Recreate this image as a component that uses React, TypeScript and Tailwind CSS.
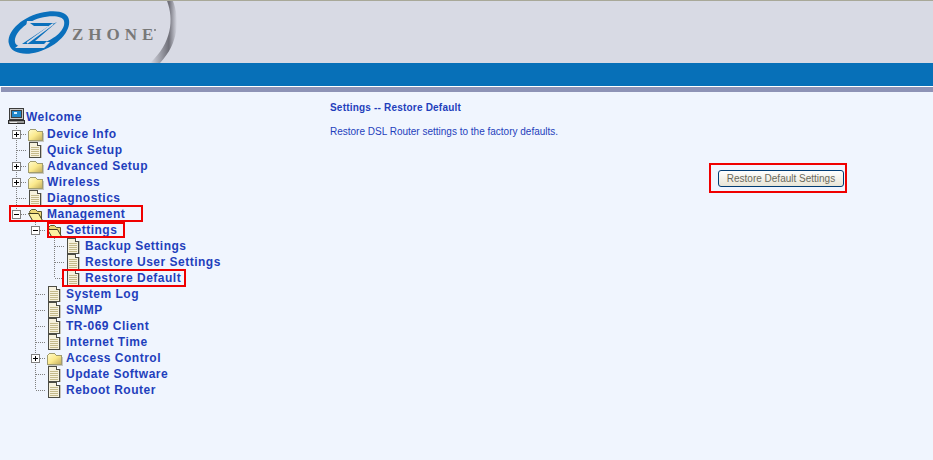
import React from 'react';

type Cell = 'I' | 'T' | 'L' | 'plus' | 'minus' | 'lastMinus' | 'blank';

interface TreeRow {
  cells: Cell[];
  icon: 'folder' | 'open' | 'doc';
  label: string;
  box?: string;
}

const rows: TreeRow[] = [
  { cells: ['plus'], icon: 'folder', label: 'Device Info' },
  { cells: ['T'], icon: 'doc', label: 'Quick Setup' },
  { cells: ['plus'], icon: 'folder', label: 'Advanced Setup' },
  { cells: ['plus'], icon: 'folder', label: 'Wireless' },
  { cells: ['T'], icon: 'doc', label: 'Diagnostics' },
  { cells: ['lastMinus'], icon: 'open', label: 'Management', box: 'left-[9px] top-[-4px] w-[134px] h-[17px]' },
  { cells: ['blank', 'minus'], icon: 'open', label: 'Settings', box: 'left-[47px] top-[-3px] w-[78px] h-[16px]' },
  { cells: ['blank', 'I', 'T'], icon: 'doc', label: 'Backup Settings' },
  { cells: ['blank', 'I', 'T'], icon: 'doc', label: 'Restore User Settings' },
  { cells: ['blank', 'I', 'L'], icon: 'doc', label: 'Restore Default', box: 'left-[62px] top-[-4px] w-[124px] h-[18px]' },
  { cells: ['blank', 'T'], icon: 'doc', label: 'System Log' },
  { cells: ['blank', 'T'], icon: 'doc', label: 'SNMP' },
  { cells: ['blank', 'T'], icon: 'doc', label: 'TR-069 Client' },
  { cells: ['blank', 'T'], icon: 'doc', label: 'Internet Time' },
  { cells: ['blank', 'plus'], icon: 'folder', label: 'Access Control' },
  { cells: ['blank', 'T'], icon: 'doc', label: 'Update Software' },
  { cells: ['blank', 'L'], icon: 'doc', label: 'Reboot Router' },
];

const Connector: React.FC<{ type: Cell }> = ({ type }) => {
  const dots = { stroke: '#808080', strokeDasharray: '1 1', shapeRendering: 'crispEdges' as const };
  if (type === 'blank') return <div className="w-[19px] h-4 shrink-0" />;
  const hasBox = type === 'plus' || type === 'minus' || type === 'lastMinus';
  const goesDown = type !== 'L' && type !== 'lastMinus';
  return (
    <svg width="19" height="16" className="shrink-0 block">
      <line x1="9.5" y1="0" x2="9.5" y2={goesDown ? 16 : 8} {...dots} />
      {type !== 'I' && <line x1="10" y1="8.5" x2="19" y2="8.5" {...dots} />}
      {hasBox && (
        <g shapeRendering="crispEdges">
          <rect x="5.5" y="4.5" width="8" height="8" fill="#fff" stroke="#808080" />
          <line x1="7" y1="8.5" x2="12" y2="8.5" stroke="#000" />
          {type === 'plus' && <line x1="9.5" y1="6" x2="9.5" y2="11" stroke="#000" />}
        </g>
      )}
    </svg>
  );
};

const FolderIcon: React.FC = () => (
  <svg width="19" height="16" className="shrink-0 block">
    <defs>
      <linearGradient id="fold" x1="0" y1="0" x2="1" y2="1">
        <stop offset="0" stopColor="#fffbd0" />
        <stop offset="0.5" stopColor="#fbe98c" />
        <stop offset="1" stopColor="#bfa95a" />
      </linearGradient>
    </defs>
    <path d="M2.5 5.5 L4.5 3.5 H9.5 L11.5 5.5 H16.5 V14.5 H2.5 Z" fill="url(#fold)" stroke="#a09c70" shapeRendering="crispEdges" />
    <path d="M3 15.5 H17.5 V7" fill="none" stroke="#c8c8c0" shapeRendering="crispEdges" />
  </svg>
);

const OpenFolderIcon: React.FC = () => (
  <svg width="19" height="16" className="shrink-0 block">
    <path d="M3.5 5.5 L5.5 3.5 H9.5 L11.5 5.5 H15.5 V13.5 H6 Z" fill="#ecd878" stroke="#5c5830" />
    <path d="M2.5 7.5 H12.5 L16.5 14.5 H6.5 Z" fill="#fbf0a0" stroke="#403c20" />
  </svg>
);

const DocIcon: React.FC = () => (
  <svg width="19" height="16" className="shrink-0 block" shapeRendering="crispEdges">
    <path d="M3.5 0.5 H11.5 L14.5 3.5 V15.5 H3.5 Z" fill="#f6f1dc" stroke="#4c4c44" />
    <path d="M11.5 0.5 V3.5 H14.5" fill="#fff" stroke="#4c4c44" />
    <path d="M5 5.5 H13 M5 7.5 H13 M5 9.5 H13 M5 11.5 H13 M5 13.5 H13" stroke="#c4b98a" />
    <path d="M15.5 3 V16.5 H5" fill="none" stroke="#c9c6ba" />
  </svg>
);

const ComputerIcon: React.FC = () => (
  <svg width="19" height="18" className="shrink-0 block" shapeRendering="crispEdges">
    <rect x="2.5" y="0.5" width="14" height="11" fill="#c8c8c8" stroke="#3c3c3c" />
    <rect x="4.5" y="2.5" width="10" height="7" fill="#2088cc" stroke="#404040" />
    <rect x="7" y="4" width="3" height="2" fill="#d8f0ff" />
    <path d="M1.5 12.5 H17.5 V15.5 H1.5 Z" fill="#9a9a9a" stroke="#2c2c2c" />
    <path d="M3 14 H10" stroke="#e8e8e8" />
  </svg>
);

const ZhoneLogo: React.FC = () => (
  <svg width="190" height="62" className="block shrink-0">
    <defs>
      <linearGradient id="swoosh" x1="0" y1="0" x2="1" y2="0">
        <stop offset="0" stopColor="#d8dae4" />
        <stop offset="0.7" stopColor="#6f6f78" />
        <stop offset="1" stopColor="#d8dae4" />
      </linearGradient>
    </defs>
    <path d="M167 0 C174 18 172 42 150 62 L160 62 C179 42 180 18 173 0 Z" fill="url(#swoosh)" />
    <path
      fillRule="evenodd"
      fill="#0a70bc"
      d="M9 43 C6 32 20 17 40 12 C56 8 68 11 69 19 C71 30 58 45 38 51 C24 55 11 52 9 43 Z M15 41 C16 47 28 47 40 43 C56 38 66 28 64 20 C63 15 52 14 40 17 C26 21 14 32 15 41 Z"
    />
    <path d="M27 20 H62 L38 41 H50 L44 47 H15 L42 26 H26 Z" fill="#d8dae4" />
    <path d="M30 22 H54 L49 25 H34 Z" fill="#0a70bc" />
    <path d="M57 21 L35 40 H47 L44 43 H22 L49 25 Z" fill="#0a70bc" />
    <path d="M53 23 L27 42" fill="none" stroke="#d8dae4" strokeWidth="1.6" />
    <text x="72" y="39" fontFamily="'Liberation Serif', serif" fontSize="17" fontWeight="bold" fill="#787878" letterSpacing="5">ZHONE</text>
    <circle cx="155" cy="29" r="0.9" fill="#6e6e6e" />
  </svg>
);

const App: React.FC = () => {
  return (
    <div className="w-[933px] h-[460px] overflow-hidden bg-[#f0f5fe] font-['Liberation_Sans',sans-serif]">
      <div className="h-[63px] bg-[#d8dae4] border-t border-[#a8a898] flex">
        <ZhoneLogo />
      </div>
      <div className="h-[23px] bg-[#0770b8]" />
      <div className="h-px bg-white" />
      <div className="h-[5px] ml-px bg-[#8e93b6]" />

      <div className="flex">
        <div className="w-[330px] shrink-0 pt-[17px] pl-[7px]">
          <div className="flex items-center h-4 mb-px">
            <ComputerIcon />
            <span className="text-[12px] font-bold text-[#1f3fbc] leading-4 tracking-[0.5px] whitespace-nowrap">Welcome</span>
          </div>
          {rows.map((row) => (
            <div key={row.label} className="relative flex items-center h-4">
              {row.cells.map((c, i) => (
                <Connector key={i} type={c} />
              ))}
              {row.icon === 'folder' && <FolderIcon />}
              {row.icon === 'open' && <OpenFolderIcon />}
              {row.icon === 'doc' && <DocIcon />}
              <span className="ml-[2px] -mt-px text-[12px] font-bold text-[#1f3fbc] leading-4 tracking-[0.5px] whitespace-nowrap">{row.label}</span>
              {row.box && <div className={`absolute -ml-[7px] mt-[3px] border-2 border-[#f00000] ${row.box}`} />}
            </div>
          ))}
        </div>

        <div className="flex-1 pt-[10px]">
          <p className="text-[10px] leading-3 font-bold text-[#1f3fbc] tracking-[0.2px]">Settings -- Restore Default</p>
          <p className="mt-3 text-[10px] leading-3 text-[#1f3fbc]">Restore DSL Router settings to the factory defaults.</p>
          <div className="flex justify-end pr-[86px] mt-[25px]">
            <div className="border-2 border-[#f00000] w-[138px] h-[30px] pl-[7px] pt-[5px]">
              <button className="block w-[126px] h-[17px] rounded-[3px] border border-[#003c74] bg-gradient-to-b from-white to-[#e8e5d6] text-[10px] leading-none text-[#6a6a5c] whitespace-nowrap">
                Restore Default Settings
              </button>
            </div>
          </div>
        </div>
      </div>
    </div>
  );
};

export default App;
